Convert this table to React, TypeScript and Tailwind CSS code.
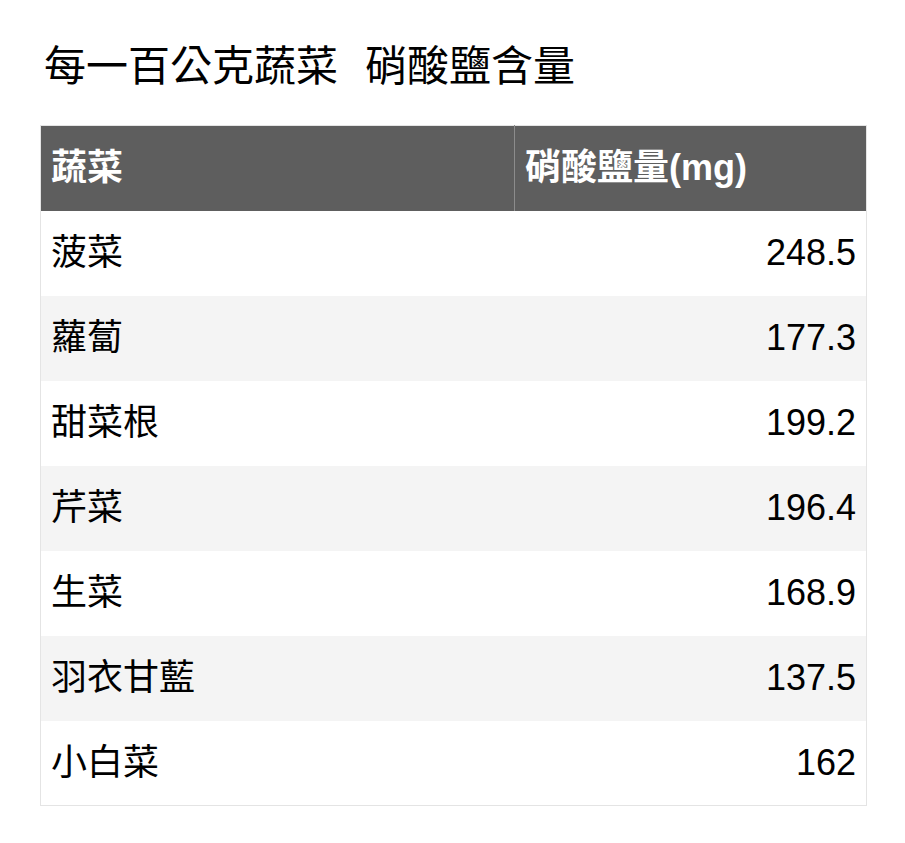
const rows: [string, string][] = [
  ["菠菜", "248.5"],
  ["蘿蔔", "177.3"],
  ["甜菜根", "199.2"],
  ["芹菜", "196.4"],
  ["生菜", "168.9"],
  ["羽衣甘藍", "137.5"],
  ["小白菜", "162"],
];

export default function App() {
  return (
    <div
      className="min-h-screen bg-white pt-[24px] text-black"
      style={{ fontFamily: '"Liberation Sans", "Noto Sans CJK TC", sans-serif' }}
    >
      {/* 標題 */}
      <h1 className="flex h-[85px] items-center pl-[44px] text-[42px] leading-none font-normal">
        <span>每一百公克蔬菜</span>
        <span className="ml-[27px]">硝酸鹽含量</span>
      </h1>

      {/* 表格 */}
      <table className="mt-[16px] ml-[40px] w-[826px] table-fixed border-collapse border border-[#e4e4e4] text-[36px]">
        <colgroup>
          <col className="w-[474px]" />
          <col className="w-[352px]" />
        </colgroup>
        <thead>
          <tr className="h-[85px] bg-[#5e5e5e] text-white">
            <th className="px-[10px] text-left font-bold">蔬菜</th>
            <th className="border-l border-[#8c8c8c] px-[10px] text-left font-bold">硝酸鹽量(mg)</th>
          </tr>
        </thead>
        <tbody>
          {rows.map(([name, value], i) => (
            <tr key={name} className={`h-[85px] ${i % 2 === 1 ? "bg-[#f4f4f4]" : "bg-white"}`}>
              <td className="px-[10px] text-left">{name}</td>
              <td className="px-[10px] text-right">{value}</td>
            </tr>
          ))}
        </tbody>
      </table>
    </div>
  );
}
